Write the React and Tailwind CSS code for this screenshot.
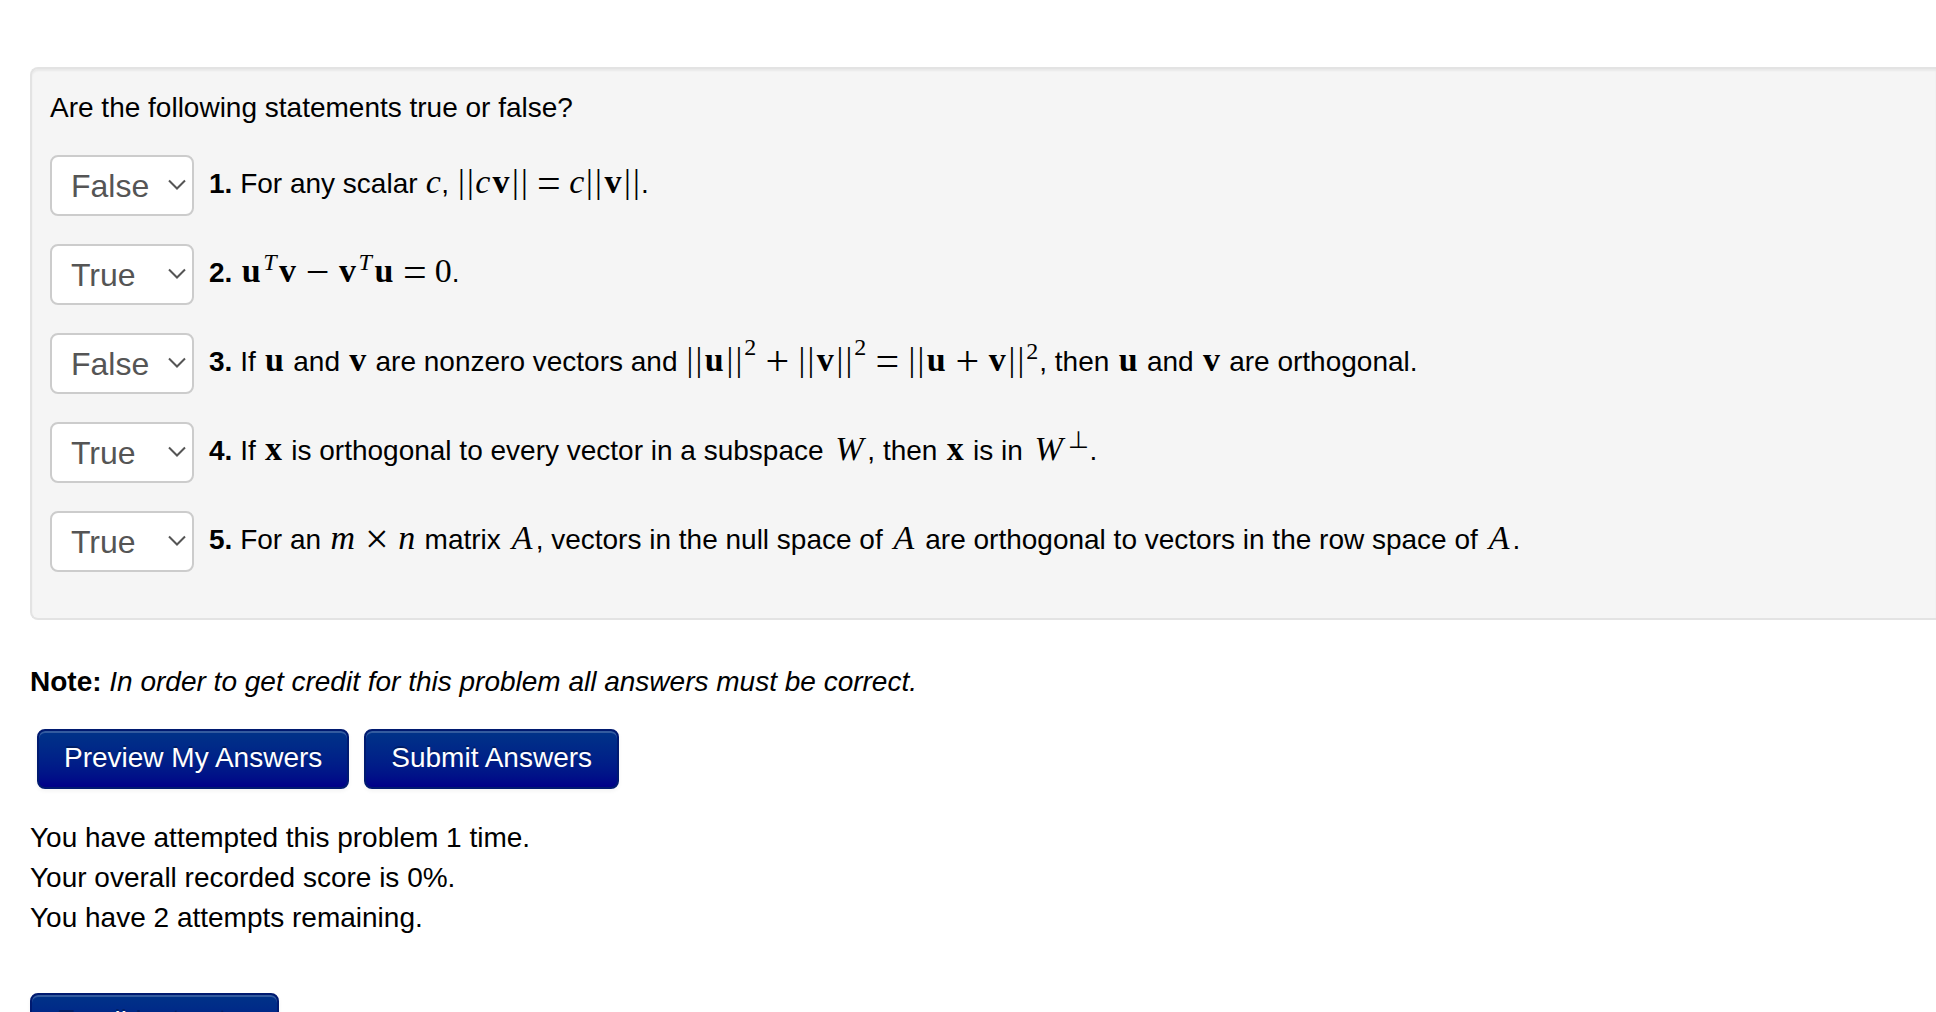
import React, { useState } from 'react';

const atomWidths = {
  c: 'w-4',
  u: 'w-[22px]',
  v: 'w-[20px]',
  x: 'w-[20px]',
  m: 'w-[28px]',
  n: 'w-[20px]',
  A: 'w-[27px]',
  W: 'w-[36px]',
};

// italic letter, e.g. a scalar or a matrix
const Var = ({ children }) => (
  <i className={`inline-block text-center font-['Liberation_Serif',serif] text-[34px] leading-[0] ${atomWidths[children]}`}>
    {children}
  </i>
);

// bold letter, a vector
const Vec = ({ children }) => (
  <b className={`inline-block text-center font-['Liberation_Serif',serif] text-[34px] leading-[0] ${atomWidths[children]}`}>
    {children}
  </b>
);

const Num = ({ children }) => (
  <span className="font-['Liberation_Serif',serif] text-[34px] leading-[0]">{children}</span>
);

const Op = ({ children }) => (
  <span className="mx-2 inline-block w-[24px] text-center align-[-4px] font-['Liberation_Serif',serif] text-[42px] leading-[0]">
    {children}
  </span>
);

const Bars = () => (
  <span className="font-['Liberation_Serif',serif] text-[34px] leading-[0]">
    <span className="inline-block w-[9px] text-center">|</span>
    <span className="inline-block w-[9px] text-center">|</span>
  </span>
);

const Norm = ({ children }) => (
  <>
    <Bars />
    {children}
    <Bars />
  </>
);

const Sup = ({ high, children }) => (
  <span
    className={`px-px font-['Liberation_Serif',serif] text-[24px] leading-[0] ${high ? 'align-[16px]' : 'align-[12px]'}`}
  >
    {children}
  </span>
);

const questions = [
  {
    answer: 'False',
    text: <>For any scalar <Var>c</Var>, <Norm><Var>c</Var><Vec>v</Vec></Norm><Op>=</Op><Var>c</Var><Norm><Vec>v</Vec></Norm>.</>,
  },
  {
    answer: 'True',
    text: <><Vec>u</Vec><Sup><i>T</i></Sup><Vec>v</Vec><Op>−</Op><Vec>v</Vec><Sup><i>T</i></Sup><Vec>u</Vec><Op>=</Op><Num>0</Num>.</>,
  },
  {
    answer: 'False',
    text: (
      <>
        If <Vec>u</Vec> and <Vec>v</Vec> are nonzero vectors and <Norm><Vec>u</Vec></Norm><Sup high>2</Sup><Op>+</Op>
        <Norm><Vec>v</Vec></Norm><Sup high>2</Sup><Op>=</Op><Norm><Vec>u</Vec><Op>+</Op><Vec>v</Vec></Norm><Sup>2</Sup>, then{' '}
        <Vec>u</Vec> and <Vec>v</Vec> are orthogonal.
      </>
    ),
  },
  {
    answer: 'True',
    text: (
      <>
        If <Vec>x</Vec> is orthogonal to every vector in a subspace <Var>W</Var>, then <Vec>x</Vec> is in{' '}
        <Var>W</Var><Sup>⊥</Sup>.
      </>
    ),
  },
  {
    answer: 'True',
    text: (
      <>
        For an <Var>m</Var><Op>×</Op><Var>n</Var> matrix <Var>A</Var>, vectors in the null space of <Var>A</Var> are
        orthogonal to vectors in the row space of <Var>A</Var>.
      </>
    ),
  },
];

const Question = ({ number, answer, text }) => {
  const [value, setValue] = useState(answer);
  const id = `answer-${number}`;

  return (
    <li className="flex h-[61px] items-start gap-[15px]">
      <div className="relative h-[61px] w-[144px] shrink-0">
        <select
          id={id}
          value={value}
          onChange={(e) => setValue(e.target.value)}
          className="h-full w-full appearance-none rounded-lg border-2 border-[#ccc] bg-white pl-[19px] text-[32px] text-[#555]"
        >
          <option>True</option>
          <option>False</option>
        </select>
        <svg className="pointer-events-none absolute top-6 right-2 h-3 w-[18px]" viewBox="0 0 18 12" fill="none" stroke="#555" strokeWidth="2">
          <path d="M1 1.5 L9 9.5 L17 1.5" />
        </svg>
      </div>
      <label htmlFor={id} className="pt-[9px] leading-10 whitespace-nowrap">
        <b>{number}.</b> {text}
      </label>
    </li>
  );
};

const Button = ({ children, className = '' }) => (
  <button
    type="button"
    className={`h-[60px] rounded-lg border-2 border-[#001a70] bg-linear-to-b from-[#003388] to-[#000088] px-[25px] pb-0.5 text-white shadow-[inset_0_2px_0_rgba(255,255,255,0.2),0_2px_4px_rgba(0,0,0,0.05)] text-shadow-[0_-2px_0_rgba(0,0,0,0.25)] ${className}`}
  >
    {children}
  </button>
);

const App = () => {
  return (
    <main className="h-screen overflow-hidden bg-white pt-[67px] pl-[30px] font-['Liberation_Sans',Arial,sans-serif] text-[28px] leading-10 text-black">
      <section className="rounded-l-lg border-2 border-r-0 border-[#e3e3e3] bg-[#f5f5f5] pt-[19px] pb-[46px] pl-[18px] shadow-[inset_0_2px_2px_rgba(0,0,0,0.05)]">
        <p>Are the following statements true or false?</p>
        <ol className="mt-[27px] flex flex-col gap-7">
          {questions.map((q, i) => (
            <Question key={i} number={i + 1} answer={q.answer} text={q.text} />
          ))}
        </ol>
      </section>

      <p className="mt-[42px]">
        <b>Note:</b> <i>In order to get credit for this problem all answers must be correct.</i>
      </p>

      <div className="mt-[27px] ml-[7px] flex gap-[15px]">
        <Button>Preview My Answers</Button>
        <Button>Submit Answers</Button>
      </div>

      <div className="mt-[29px]">
        <p>You have attempted this problem 1 time.</p>
        <p>Your overall recorded score is 0%.</p>
        <p>You have 2 attempts remaining.</p>
      </div>

      <Button className="mt-[55px]">Email Instructor</Button>
    </main>
  );
};

export default App;
